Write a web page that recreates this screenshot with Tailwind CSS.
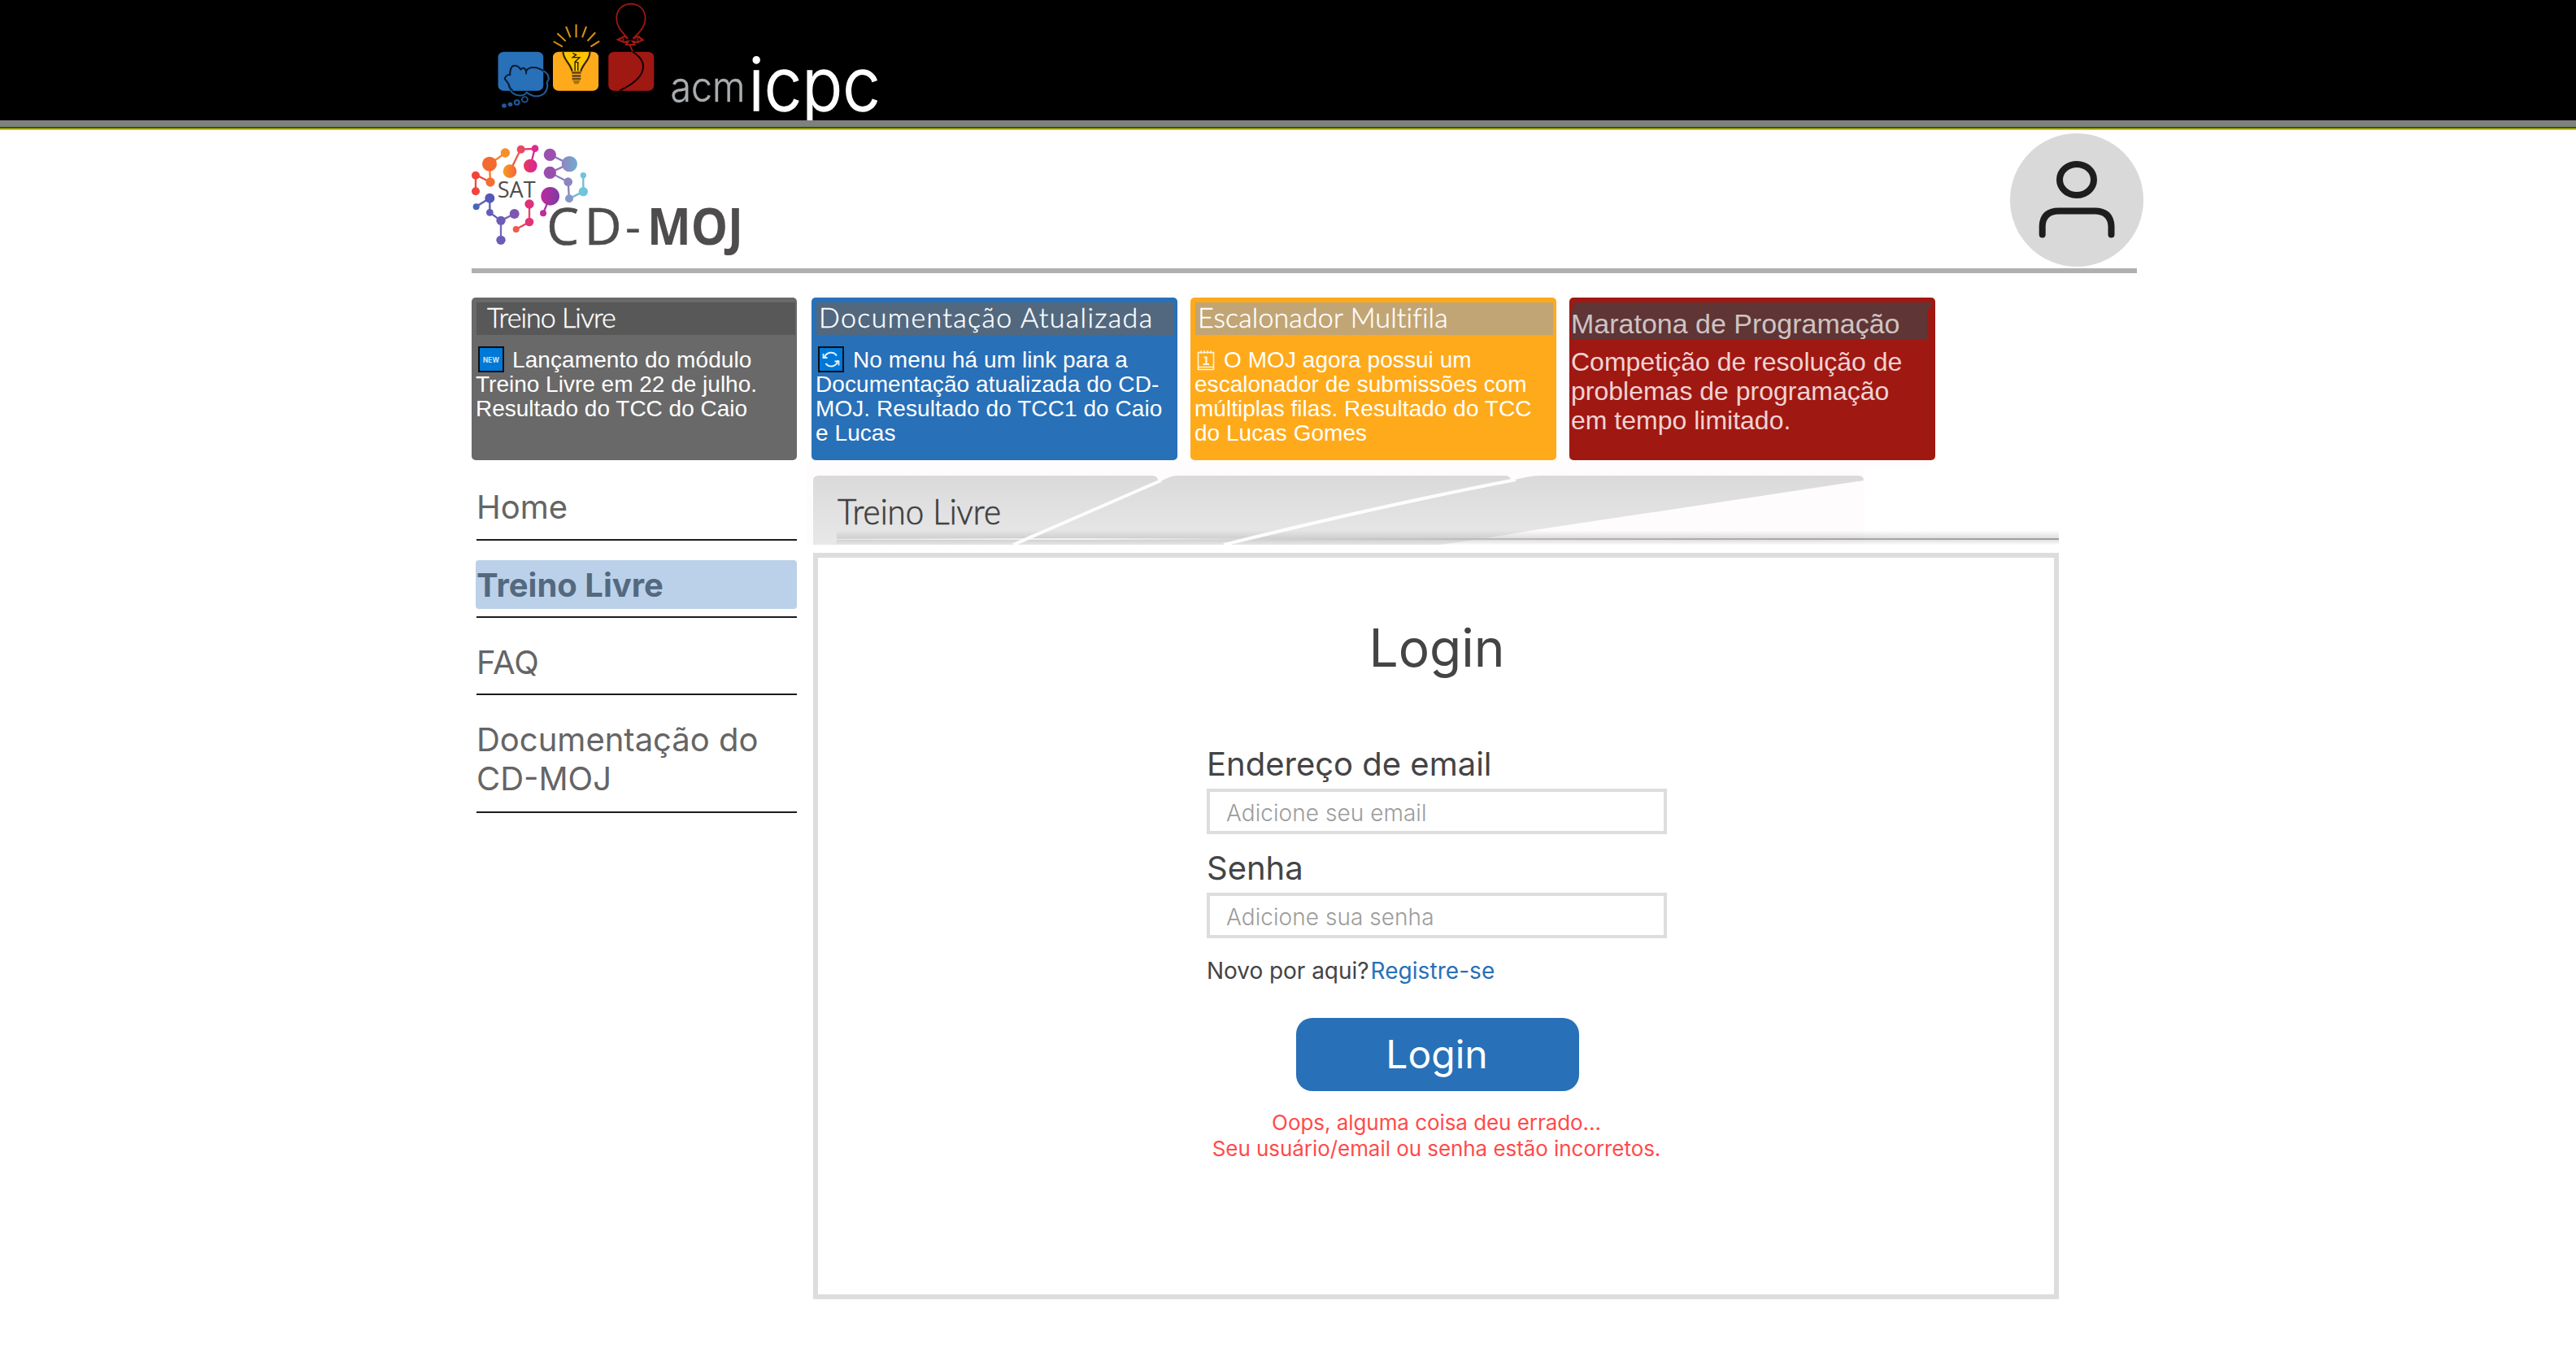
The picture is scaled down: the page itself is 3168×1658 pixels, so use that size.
<!DOCTYPE html>
<html lang="pt-BR">
<head>
<meta charset="utf-8">
<title>CD-MOJ</title>
<script src="https://cdn.jsdelivr.net/npm/@tailwindcss/browser@4"></script>
</head>
<body class="bg-white w-[3168px] h-[1658px] overflow-hidden font-['Inter',sans-serif]">

<header class="bg-black h-[160px] flex flex-col">
  <svg class="ml-[570px] block" width="560" height="148" viewBox="0 0 560 148" fill="none">
    <g transform="scale(.357143 .333333)">
      <!-- thought cloud -->
      <rect x="119" y="191" width="156" height="144" rx="20" fill="#2870b8"/>
      <path d="M155 309C150 303 152 304 142 291C145 278 154 275 160 276C160 262 162 252 168 245C178 238 190 244 197 256C204 248 212 250 216 262C222 248 250 242 275 262" stroke="#0a1c30" stroke-width="6"/>
      <path d="M216 256V274" stroke="#0a1c30" stroke-width="5"/>
      <path d="M275 262C288 266 295 282 293 294C288 302 284 306 289 312C290 336 276 354 252 355C238 356 228 348 217 341C210 352 196 354 182 350C168 346 158 336 155 309" stroke="#1f5a96" stroke-width="6"/>
      <path d="M155 309C158 324 162 330 170 334" stroke="#0a1c30" stroke-width="6"/>
      <circle cx="211" cy="367" r="10" stroke="#1f5a96" stroke-width="5"/>
      <circle cx="184" cy="378" r="8" stroke="#1f5a96" stroke-width="6"/>
      <circle cx="161" cy="385" r="8" fill="#1f5a96"/><circle cx="140" cy="390" r="8" fill="#1f5a96"/>
      <!-- light bulb -->
      <rect x="308" y="191" width="157" height="144" rx="20" fill="#ffaa1a"/>
      <path d="M343 192H435C436 222 412 232 404 263H374C368 232 344 222 343 192Z" fill="#fdc400"/>
      <path d="M343 192C344 222 368 232 374 263M435 192C436 222 412 232 404 263" stroke="#2a2205" stroke-width="6"/>
      <path d="M376 196L388 202L376 212L400 212L384 228L397 232M384 230V262M394 232V262" stroke="#2a2205" stroke-width="4"/>
      <path d="M373 268H405M374 280H404M374 291H404" stroke="#6b4a14" stroke-width="8"/>
      <path d="M376 297H402L396 310H382Z" fill="#a87415"/>
      <path d="M388 90V138M353 98L368 138M423 98L409 138M323 123L352 152M454 120L427 151M310 153L341 172M468 152L438 172" stroke="#d68f12" stroke-width="6"/>
      <!-- balloon -->
      <rect x="499" y="191" width="157" height="144" rx="20" fill="#a01812"/>
      <path d="M566 142C546 118 526 98 527 66C528 34 548 15 576 14C606 15 626 36 626 68C626 98 606 120 584 142" stroke="#a01812" stroke-width="5"/>
      <path d="M566 142L554 134L531 146L552 156L568 152L560 165L590 165L582 152L600 156L618 148L602 134L584 142" stroke="#a01812" stroke-width="6"/>
      <circle cx="545" cy="146" r="6" stroke="#a01812" stroke-width="4"/><circle cx="605" cy="146" r="6" stroke="#a01812" stroke-width="4"/>
      <path d="M572 165L584 193" stroke="#a01812" stroke-width="5"/>
      <path d="M582 190C604 208 618 220 619 246C618 284 582 312 538 334" stroke="#160302" stroke-width="6"/>
    </g>
    <text x="254.500" y="125" font-family="Inter, sans-serif" font-weight="300" font-size="51" fill="#a9adb0" stroke="#a9adb0" stroke-width=".4" textLength="92" lengthAdjust="spacingAndGlyphs">acm</text>
    <text x="350.500" y="136" font-family="Inter, sans-serif" font-weight="300" font-size="90" fill="#fff" stroke="#fff" stroke-width="1.400" textLength="162" lengthAdjust="spacingAndGlyphs">icpc</text>
  </svg>
  <div class="h-2 bg-[#808080]"></div>
  <div class="h-0.5 bg-[#006b0c]"></div>
  <div class="h-0.5 bg-[#ffb400]"></div>
</header>

<div class="ml-[580px] w-[2048px] h-[176px] border-b-6 border-[#b0b0b0] flex justify-between">
  <svg width="350" height="170" viewBox="60 0 1050 510" fill="none">
    <g stroke-width="7">
      <path d="M75 226V165L129 192" stroke="#f04a3c"/>
      <path d="M129 192L126 126L183 85" stroke="#f47a2c"/>
      <path d="M201 152L241 71" stroke="#f0583f"/>
      <path d="M241 71L293 69" stroke="#e43a6a"/>
      <path d="M293 69L277 132" stroke="#da2a8c"/>
      <path d="M350 91L420 125L349 157" stroke="#8f78b8"/>
      <path d="M349 157L416 191L420 253" stroke="#8a82bd"/>
      <path d="M420 253L472 227V167" stroke="#73bdd5"/>
      <path d="M76 283L127 251V304L168 334" stroke="#5a5fb8"/>
      <path d="M218 309L168 334V406" stroke="#7a63bd"/>
      <path d="M273 273V339L224 366" stroke="#ea4368"/>
      <path d="M350 244L324 307" stroke="#b02f9c"/>
    </g>
    <circle cx="75" cy="167" r="15" fill="#ef443e"/><circle cx="75" cy="226" r="15" fill="#f0443e"/>
    <circle cx="129" cy="192" r="17" fill="#f46e32"/><circle cx="126" cy="125" r="27" fill="#f4692f"/>
    <circle cx="184" cy="84" r="17" fill="#f78f28"/>
    <circle cx="201" cy="152" r="25" fill="url(#orangeNode)"/>
    <circle cx="242" cy="71" r="15" fill="#ea4860"/><circle cx="294" cy="68" r="13" fill="#dc2a90"/>
    <circle cx="277" cy="132" r="25" fill="url(#pinkNode)"/>
    <circle cx="349" cy="91" r="23" fill="#9c50ae"/><circle cx="349" cy="157" r="23" fill="#984eae"/>
    <circle cx="421" cy="125" r="29" fill="url(#blueNode)"/>
    <circle cx="416" cy="191" r="16" fill="#8a84c0"/><circle cx="420" cy="253" r="15" fill="#8598c8"/>
    <circle cx="472" cy="167" r="11" fill="#70c5d8"/><circle cx="472" cy="227" r="17" fill="#70c5d8"/>
    <circle cx="127" cy="251" r="18" fill="#5459b4"/><circle cx="77" cy="283" r="12" fill="#4a66b8"/>
    <circle cx="127" cy="304" r="13" fill="#645cb6"/><circle cx="168" cy="334" r="17" fill="#6c5cb6"/>
    <circle cx="218" cy="309" r="18" fill="#7c56b0"/><circle cx="168" cy="406" r="17" fill="#6c5cb6"/>
    <circle cx="273" cy="273" r="17" fill="#e03078"/><circle cx="273" cy="339" r="16" fill="#e23472"/>
    <circle cx="224" cy="366" r="12" fill="#f25a4a"/>
    <circle cx="350" cy="244" r="34" fill="url(#purpleNode)"/><circle cx="324" cy="307" r="12" fill="#bb2ea0"/>
    <g fill="#4f4c4d" font-family="'Open Sans', sans-serif">
      <text x="155" y="249" font-size="81" textLength="141" lengthAdjust="spacingAndGlyphs">SAT</text>
      <text x="337" y="423" font-size="189" stroke="#4f4c4d" stroke-width="2">C</text>
      <text x="476" y="423" font-size="189" stroke="#4f4c4d" stroke-width="2">D</text>
      <text x="626" y="423" font-size="189" textLength="58" lengthAdjust="spacingAndGlyphs">-</text>
      <text x="708" y="423" font-size="189" font-weight="700" textLength="354" lengthAdjust="spacingAndGlyphs">MOJ</text>
    </g>
    <defs>
      <linearGradient id="orangeNode"><stop stop-color="#f99d1f"/><stop offset="1" stop-color="#f4623c"/></linearGradient>
      <linearGradient id="pinkNode"><stop stop-color="#e8395c"/><stop offset="1" stop-color="#d4279c"/></linearGradient>
      <linearGradient id="blueNode"><stop stop-color="#8f84c0"/><stop offset="1" stop-color="#72acd0"/></linearGradient>
      <linearGradient id="purpleNode"><stop stop-color="#bd2a9c"/><stop offset="1" stop-color="#7d3aa4"/></linearGradient>
    </defs>
  </svg>
  <div class="mt-1 -mr-2 size-[164px] shrink-0 rounded-full bg-[#d9d9d9]">
    <svg width="164" height="164" viewBox="0 0 164 164" fill="none" stroke="#1e1e1e" stroke-width="8" stroke-linecap="round">
      <ellipse cx="82" cy="57" rx="21" ry="19"/>
      <path d="M39.700 124.500V114Q40.500 95.500 60 95.500H104Q123.500 95.500 124.500 114V124.500"/>
    </svg>
  </div>
</div>

<section class="ml-[580px] mt-[30px] flex h-[200px] text-white text-[28px] leading-[30px] font-['Liberation_Sans',Arial,sans-serif] whitespace-nowrap">
  <article class="w-[400px] mr-[18px] rounded-[5px] bg-[#696969] pt-1.5">
    <h2 class="ml-1.5 mr-0.5 h-10 pl-[13px] bg-[#585858] font-['Lato',sans-serif] font-light text-[34px] leading-[36px] tracking-[-0.97px] [-webkit-text-stroke:0.4px_white]">Treino Livre</h2>
    <div class="mt-4 pl-2 h-[30px] flex items-center tracking-[0.09px]">
      <svg class="shrink-0 mr-[10px] -mt-0.5" width="32" height="32" viewBox="0 0 32 32"><rect width="32" height="32" fill="#0a0f14"/><rect x="2" y="2" width="28" height="28" fill="#0078d7"/><text x="6" y="19.500" font-family="Inter, sans-serif" font-weight="700" font-size="8.500" fill="#cfe6f8" textLength="20" lengthAdjust="spacingAndGlyphs">NEW</text></svg>Lançamento do módulo
    </div>
    <p class="pl-[5px]">Treino Livre em 22 de julho.<br>Resultado do TCC do Caio</p>
  </article>
  <article class="w-[450px] mr-4 rounded-[5px] bg-[#2870b8] pt-1.5">
    <h2 class="ml-1.5 mr-1 h-10 pl-[3px] bg-[#52687f] font-['Lato',sans-serif] font-light text-[34px] leading-[36px] tracking-[1.35px] [-webkit-text-stroke:0.4px_white]">Documentação Atualizada</h2>
    <div class="mt-4 pl-2 h-[30px] flex items-center tracking-[0.07px]">
      <svg class="shrink-0 mr-[11px] -mt-0.5" width="32" height="32" viewBox="0 0 32 32" fill="none"><rect width="32" height="32" fill="#0a0f14"/><rect x="2" y="2" width="28" height="28" fill="#0078d7"/><path d="M8 14A8.300 8.300 0 0 1 23 11.500M24.500 17A8.300 8.300 0 0 1 9.500 21" stroke="#e4f1fb" stroke-width="2"/><path d="M11.500 14H6.500V9M20.500 18.500H25.500V23.500" stroke="#e4f1fb" stroke-width="1.800"/></svg>No menu há um link para a
    </div>
    <p class="pl-[5px] tracking-[0.07px]">Documentação atualizada do CD-<br>MOJ. Resultado do TCC1 do Caio<br>e Lucas</p>
  </article>
  <article class="w-[450px] mr-4 rounded-[5px] bg-[#ffaa1a] pt-1.5">
    <h2 class="ml-1.5 mr-1 h-10 pl-[3px] bg-[#c2a574] font-['Lato',sans-serif] font-light text-[34px] leading-[36px] tracking-[0.12px] [-webkit-text-stroke:0.4px_white]">Escalonador Multifila</h2>
    <div class="mt-4 pl-2 h-[30px] flex items-center tracking-[0.06px]">
      <svg class="shrink-0 mr-[11px]" width="22" height="26" viewBox="0 0 22 26" fill="none" stroke="#fff4dc"><path d="M1.500 3.500H20.500V24.500H1.500ZM1.500 21.500H20.500" stroke-width="1.600"/><path d="M5 1V5M9 1V5M13 1V5M17 1V5" stroke-width="1.400"/><path d="M8.500 9.500H11.500V17.500M7.500 18H15" stroke-width="2.200"/></svg>O MOJ agora possui um
    </div>
    <p class="pl-[5px] tracking-[0.03px]">escalonador de submissões com<br>múltiplas filas. Resultado do TCC<br>do Lucas Gomes</p>
  </article>
  <article class="w-[450px] rounded-[5px] bg-[#a01812] pt-1.5">
    <div class="ml-1.5 mr-1 h-[7px] bg-[#5f3535]"></div>
    <h2 class="ml-0.5 mr-2.5 h-[39px] bg-[#5f3535] text-[#cfc3c3] text-[34px] leading-[38px]">Maratona de Programação</h2>
    <p class="mt-[9px] pl-0.5 text-[32px] leading-[36px] text-[#f0d3d2]">Competição de resolução de<br>problemas de programação<br>em tempo limitado.</p>
  </article>
</section>

<div class="ml-[580px] flex">
  <nav class="w-[400px] mr-5 pt-[34px] text-[40px] leading-[48px] text-[#656565]">
    <div class="ml-1.5 pb-[15px]">Home</div>
    <div class="ml-1.5 h-0.5 bg-[#1c1c1c]"></div>
    <div class="ml-[5px] mt-6 h-[60px] rounded-[4px] bg-[#bbd1e9] pl-px pt-[7px] font-bold text-[#54697f]">Treino Livre</div>
    <div class="ml-1.5 mt-[9px] h-0.5 bg-[#1c1c1c]"></div>
    <div class="ml-1.5 pt-[31px] pb-[14px]">FAQ</div>
    <div class="ml-1.5 h-0.5 bg-[#1c1c1c]"></div>
    <div class="ml-1.5 pt-[31px] pb-[16px]">Documentação do<br>CD-MOJ</div>
    <div class="ml-1.5 h-0.5 bg-[#1c1c1c]"></div>
  </nav>

  <main class="w-[1532px]">
    <svg class="block -ml-2" width="1540" height="104" viewBox="992 566 1540 104" fill="none">
      <defs>
        <linearGradient id="tab" x1="0" y1="585" x2="0" y2="670" gradientUnits="userSpaceOnUse"><stop stop-color="#dbdadb"/><stop offset="1" stop-color="#e9e8e9"/></linearGradient>
        <linearGradient id="shadeTop" x1="0" y1="652" x2="0" y2="663" gradientUnits="userSpaceOnUse"><stop stop-color="#a8a8a8" stop-opacity="0"/><stop offset="1" stop-color="#a8a8a8" stop-opacity=".4"/></linearGradient>
        <linearGradient id="shadeBottom" x1="0" y1="664" x2="0" y2="670" gradientUnits="userSpaceOnUse"><stop stop-color="#a8a8a8" stop-opacity=".35"/><stop offset="1" stop-color="#a8a8a8" stop-opacity=".03"/></linearGradient>
        <linearGradient id="rule" x1="1029" y1="0" x2="2532" y2="0" gradientUnits="userSpaceOnUse"><stop stop-color="#f2f2f2" stop-opacity=".2"/><stop offset=".2" stop-color="#f4f4f4"/><stop offset=".36" stop-color="#d0d0d0"/><stop offset=".6" stop-color="#b2b2b2"/><stop offset="1" stop-color="#9e9e9e"/></linearGradient>
      </defs>
      <path d="M992 566H2372V575H2292V670H992Z" fill="#fefcfd"/>
      <path d="M1000 670V591Q1000 585 1007 585H1418Q1424 586 1424 591L1247 670Z" fill="url(#tab)"/>
      <path d="M1250 670L1438 587Q1443 585 1448 585H1852Q1858 586 1858 591Q1700 624 1504 670Z" fill="url(#tab)"/>
      <path d="M1512 670Q1690 626 1872 588Q1884 585 1894 585H2286Q2292 586 2292 591L1880 653Q1830 662 1770 670Z" fill="url(#tab)"/>
      <rect x="1029" y="652" width="1503" height="11" fill="url(#shadeTop)"/>
      <rect x="1029" y="664" width="1503" height="6" fill="url(#shadeBottom)"/>
      <rect x="1029" y="662" width="1503" height="2" fill="url(#rule)"/>
      <path d="M1246 670L1428 591M1505 670Q1698 622 1864 590" stroke="#fdfdfd" stroke-width="4"/>
      <text x="1030" y="645" font-family="Lato, sans-serif" font-weight="300" font-size="43" fill="#404040" stroke="#404040" stroke-width=".7" textLength="201" lengthAdjust="spacingAndGlyphs">Treino Livre</text>
    </svg>
    <section class="mt-2.5 h-[918px] border-6 border-[#dedcdd] pl-[478px] pt-[72px] text-[#444]">
      <form class="w-[566px] flex flex-col">
        <h1 class="text-center text-[64px] leading-[78px]">Login</h1>
        <label class="mt-[80px] text-[40px] leading-[48px]">Endereço de email</label>
        <input class="mt-1.5 h-14 border-4 border-[#dedcdd] pl-5 pt-[3px] text-[28px] font-light tracking-[0.05px] placeholder:text-[#9c9c9c]" placeholder="Adicione seu email">
        <label class="mt-[18px] text-[40px] leading-[48px]">Senha</label>
        <input class="mt-1.5 h-14 border-4 border-[#dedcdd] pl-5 pt-[3px] text-[28px] font-light tracking-[0.05px] placeholder:text-[#9c9c9c]" placeholder="Adicione sua senha">
        <p class="mt-[23px] flex text-[28px] leading-[34px] tracking-[-0.04px]">Novo por aqui?<a class="ml-0.5 text-[#2870b8] tracking-[0.05px]">Registre-se</a></p>
        <button type="button" class="mt-[41px] ml-[110px] w-[348px] h-[90px] rounded-[20px] bg-[#2870b8] pr-0.5 text-white text-[48px] leading-[58px]">Login</button>
        <p class="mt-[23px] -ml-px text-center text-[26px] leading-[32px] tracking-[-0.06px] text-[#ff4b4b]">Oops, alguma coisa deu errado...<br>Seu usuário/email ou senha estão incorretos.</p>
      </form>
    </section>
  </main>
</div>
</body>
</html>
